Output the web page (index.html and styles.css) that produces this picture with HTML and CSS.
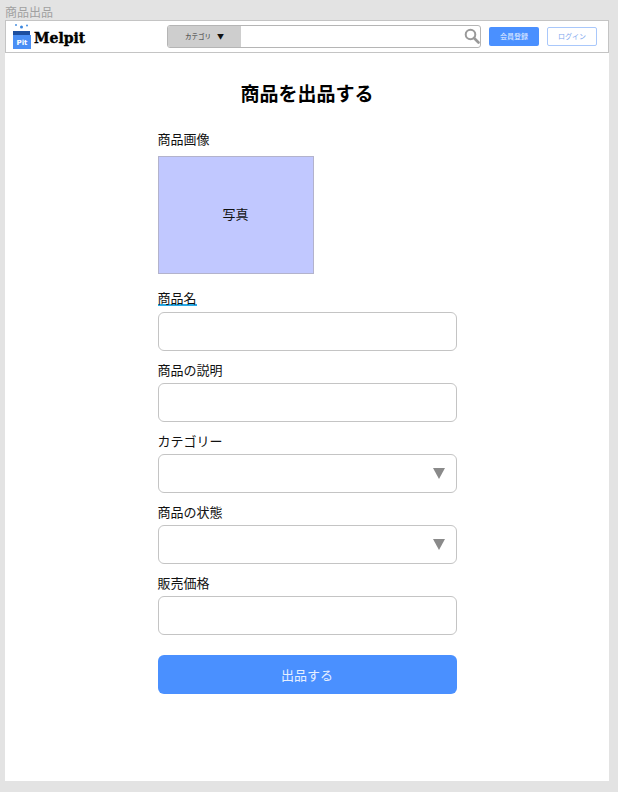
FILE: index.html
```html
<!DOCTYPE html>
<html lang="ja">
<head>
<meta charset="utf-8">
<title>商品出品</title>
<link rel="stylesheet" href="styles.css">
</head>
<body>
<div class="page-name">商品出品</div>
<div class="frame">
  <header class="header">
    <div class="logo">
      <svg class="logo-icon" viewBox="0 0 20 26" width="20" height="26">
        <circle cx="4" cy="2" r="1" fill="#4a90e2"/>
        <circle cx="9.500" cy="4" r="1.500" fill="#3a86e0"/>
        <circle cx="15" cy="2.500" r="1" fill="#4a90e2"/>
        <path d="M1 8 H18 V13 H1 Z" fill="#1d4fa0"/>
        <path d="M1 12 H19 V26 H1 Z" fill="#4a8ff5"/>
        <text x="10" y="22" class="logo-pit" text-anchor="middle">Pit</text>
      </svg>
      <span class="logo-text">Melpit</span>
    </div>
    <div class="search">
      <div class="search-cat"><span>カテゴリ</span><span class="search-caret">▼</span></div>
      <div class="search-field">
        <svg viewBox="0 0 16 16" width="16" height="16"><circle cx="6.500" cy="6.500" r="4.800" fill="none" stroke="#999" stroke-width="2"/><path d="M10 10 L14.500 14.500" stroke="#999" stroke-width="2.600" stroke-linecap="round"/></svg>
      </div>
    </div>
    <a class="btn-signup">会員登録</a>
    <a class="btn-login">ログイン</a>
  </header>
  <main class="main">
    <h1 class="title">商品を出品する</h1>
    <form class="form">
      <div class="label label-image">商品画像</div>
      <div class="photo">写真</div>
      <div class="label label-name"><span class="underlined">商品名</span></div>
      <div class="box"></div>
      <div class="label">商品の説明</div>
      <div class="box"></div>
      <div class="label">カテゴリー</div>
      <div class="box select"><span class="caret"></span></div>
      <div class="label">商品の状態</div>
      <div class="box select"><span class="caret"></span></div>
      <div class="label">販売価格</div>
      <div class="box"></div>
      <div class="submit">出品する</div>
    </form>
  </main>
</div>
</body>
</html>
```
FILE: styles.css
```css
* { box-sizing: border-box; }
html, body { margin: 0; height: 100%; }
body {
  background: #e3e3e3;
  font-family: "Noto Sans CJK JP", "Noto Sans", sans-serif;
  color: #111;
  padding: 4px 9px 11px 5px;
  display: flex;
  flex-direction: column;
}
.page-name { font-size: 12px; line-height: 16px; color: #a0a0a0; }
.frame { flex: 1; background: #fff; }
.header {
  height: 33px;
  border: 1px solid #c4c4c4;
  display: flex;
  align-items: center;
  padding: 0 0 1px 6px;
}
.logo { width: 155px; display: flex; align-items: center; gap: 2px; }
.logo-icon { display: block; }
.logo-pit { font: bold 7px "DejaVu Sans", sans-serif; fill: #fff; }
.logo-text { font: bold 14px "DejaVu Serif", serif; -webkit-text-stroke: 0.4px #000; color: #000; margin-top: 3px; }
.search {
  width: 314px;
  height: 23px;
  border: 1px solid #b5b5b5;
  border-radius: 3px;
  display: flex;
  overflow: hidden;
}
.search-cat {
  width: 73px;
  background: #cecece;
  font-size: 6.500px;
  color: #333;
  display: flex;
  align-items: center;
  justify-content: center;
  gap: 6px;
}
.search-caret { font-size: 7px; color: #111; }
.search-field { flex: 1; display: flex; align-items: center; justify-content: flex-end; }
.btn-signup, .btn-login {
  height: 19px;
  border-radius: 2px;
  font-size: 7px;
  display: flex;
  align-items: center;
  justify-content: center;
}
.btn-signup { width: 50px; margin-left: 8px; background: #4a90ff; color: #e8f0ff; }
.btn-login { width: 50px; margin-left: 8px; background: #fff; border: 1px solid #a9c8fb; color: #7fa9ee; }
.main { display: flex; flex-direction: column; align-items: center; }
.title { margin: 26px 0 0; font-size: 19px; line-height: 28px; font-weight: 700; color: #000; }
.form { width: 299px; margin-top: 22px; }
.label { font-size: 13px; line-height: 19px; margin-top: 9px; margin-bottom: 4px; color: #111; }
.label-image { margin-top: 0; margin-bottom: 8px; }
.label-name { margin-top: 17px; margin-bottom: 6px; line-height: 13px; }
.underlined { border-bottom: 2px solid #29a9e6; display: block; width: fit-content; line-height: 13px; }
.photo {
  width: 156px;
  height: 118px;
  background: #c1c8ff;
  border: 1px solid #b3b3cc;
  display: flex;
  align-items: center;
  justify-content: center;
  font-size: 13px;
  padding-bottom: 4px;
}
.box {
  height: 39px;
  border: 1px solid #c4c4c4;
  border-radius: 6px;
  background: #fff;
  display: flex;
  align-items: center;
  justify-content: flex-end;
  padding-right: 11px;
}
.caret {
  width: 0;
  height: 0;
  border-left: 6px solid transparent;
  border-right: 6px solid transparent;
  border-top: 11px solid #8a8a8a;
}
.submit {
  margin-top: 20px;
  height: 39px;
  border-radius: 6px;
  background: #4a90ff;
  color: #e6efff;
  font-size: 13px;
  display: flex;
  align-items: center;
  justify-content: center;
}
```
